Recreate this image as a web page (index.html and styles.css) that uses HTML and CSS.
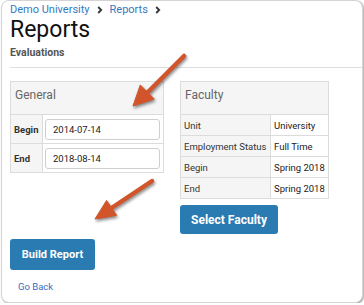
FILE: index.html
```html
<!DOCTYPE html>
<html lang="en">
<head>
    <meta charset="UTF-8">
    <meta name="viewport" content="width=device-width, initial-scale=1.0">
    <title>Reports</title>
    <link rel="stylesheet" href="styles.css">
</head>
<body>
    <div class="frame">
        <!-- Breadcrumbs -->
        <nav class="crumbs">
            <a href="#">Demo University</a>
            <svg class="chev" width="6" height="8" viewBox="0 0 6 8"><path d="M1.2 1 L4.2 4 L1.2 7" fill="none" stroke="#333" stroke-width="1.8"/></svg>
            <a href="#">Reports</a>
            <svg class="chev" width="6" height="8" viewBox="0 0 6 8"><path d="M1.2 1 L4.2 4 L1.2 7" fill="none" stroke="#333" stroke-width="1.8"/></svg>
        </nav>
        <h1>Reports</h1>
        <div class="subtitle">Evaluations</div>
        <hr>

        <div class="columns">
            <!-- General panel -->
            <div class="panel general">
                <div class="panel-head">General</div>
                <table>
                    <tr>
                        <th>Begin</th>
                        <td><input type="text" value="2014-07-14"></td>
                    </tr>
                    <tr>
                        <th>End</th>
                        <td><input type="text" value="2018-08-14"></td>
                    </tr>
                </table>
            </div>

            <!-- Faculty panel -->
            <div class="faculty-col">
                <div class="panel faculty">
                    <div class="panel-head">Faculty</div>
                    <table>
                        <tr><th>Unit</th><td>University</td></tr>
                        <tr><th>Employment Status</th><td>Full Time</td></tr>
                        <tr><th>Begin</th><td>Spring 2018</td></tr>
                        <tr><th>End</th><td>Spring 2018</td></tr>
                    </table>
                </div>
                <button class="btn select-btn">Select Faculty</button>
            </div>
        </div>

        <button class="btn build-btn">Build Report</button>
        <a href="#" class="back-link">Go Back</a>
    </div>

    <!-- Annotation arrows -->
    <svg class="arrows" width="364" height="305" viewBox="0 0 364 305">
        <g fill="#d1542a" stroke="#d1542a" stroke-linejoin="round">
            <line x1="184" y1="56" x2="146" y2="94" stroke-width="4.5" stroke-linecap="round"/>
            <polygon points="133,106 140.3,84.9 154.3,99.1" stroke-width="1"/>
            <line x1="152" y1="181" x2="110" y2="209" stroke-width="4.5" stroke-linecap="round"/>
            <polygon points="95,219 106.6,200.4 116.6,215.4" stroke-width="1"/>
        </g>
    </svg>
</body>
</html>
```

FILE: styles.css
```css
/* General Styles */
body {
    font-family: Roboto, 'Liberation Sans', sans-serif;
    margin: 0;
    padding: 0;
    background: #fff;
    color: #333;
    position: relative;
    overflow: hidden;
}

.frame {
    box-sizing: border-box;
    height: 303px;
    margin: 0 1px 0 1px;
    padding: 1px 0 0 8px;
    border: 1px solid #d4d4d4;
    border-radius: 8px;
    box-shadow: 1px 1px 2px rgba(0, 0, 0, 0.35);
    background: #fff;
}

/* Breadcrumbs */
.crumbs {
    display: flex;
    align-items: center;
    gap: 7px;
    height: 16px;
    font-size: 11px;
    line-height: 16px;
}

.crumbs a {
    color: #3679bf;
    text-decoration: none;
}

.chev {
    display: block;
}

h1 {
    margin: 0;
    font-size: 23px;
    font-weight: 400;
    line-height: 24px;
    color: #111;
}

.subtitle {
    margin-top: 4px;
    font-size: 10.5px;
    font-weight: bold;
    line-height: 14px;
    color: #555;
}

hr {
    margin: 7px 0 0 0;
    border: none;
    border-top: 1px solid #dedede;
}

/* Panels */
.columns {
    display: flex;
    align-items: flex-start;
    gap: 16px;
    margin-top: 13px;
}

.panel {
    border: 1px solid #dcdcdc;
    background: #fff;
}

.panel-head {
    box-sizing: border-box;
    height: 33px;
    padding: 5px 0 0 4px;
    background: #f5f5f5;
    border-bottom: 1px solid #dcdcdc;
    font-size: 12px;
    line-height: 16px;
    color: #666;
}

.panel table {
    width: 100%;
    border-collapse: collapse;
}

.panel tr + tr th,
.panel tr + tr td {
    border-top: 1px solid #dcdcdc;
}

.panel th {
    background: #f5f5f5;
    border-right: 1px solid #dcdcdc;
    text-align: left;
    white-space: nowrap;
}

/* General */
.general {
    width: 152px;
}

.general th {
    width: 30px;
    padding: 0 0 0 3px;
    font-size: 9.5px;
    font-weight: bold;
    color: #333;
}

.general td {
    padding: 4px 3px 3px 2px;
}

.general input {
    box-sizing: border-box;
    display: block;
    width: 115px;
    height: 21px;
    padding: 0 0 0 7px;
    border: 1px solid #cfcfcf;
    border-radius: 3px;
    font-family: inherit;
    font-size: 9.5px;
    color: #222;
}

/* Faculty */
.faculty {
    width: 147px;
}

.faculty th,
.faculty td {
    height: 20px;
    padding: 0 0 0 3px;
    font-size: 9.5px;
    font-weight: 400;
    color: #333;
}

.faculty th {
    width: 86px;
}

.faculty td {
    color: #222;
}

/* Buttons */
.btn {
    display: block;
    border: none;
    border-radius: 3px;
    background-color: #2a7bb1;
    color: #fff;
    font-family: inherit;
    font-weight: bold;
    cursor: pointer;
    padding: 0;
}

.select-btn {
    width: 98px;
    height: 29px;
    margin-top: 6px;
    font-size: 12px;
}

.build-btn {
    width: 85px;
    height: 31px;
    margin-top: 5px;
    font-size: 11px;
}

.back-link {
    display: inline-block;
    margin: 11px 0 0 8px;
    font-size: 9.5px;
    line-height: 12px;
    color: #3a6cc0;
    text-decoration: none;
}

/* Arrows overlay */
.arrows {
    position: absolute;
    top: 0;
    left: 0;
    pointer-events: none;
    filter: drop-shadow(1px 2px 1.5px rgba(0, 0, 0, 0.45));
}
```
